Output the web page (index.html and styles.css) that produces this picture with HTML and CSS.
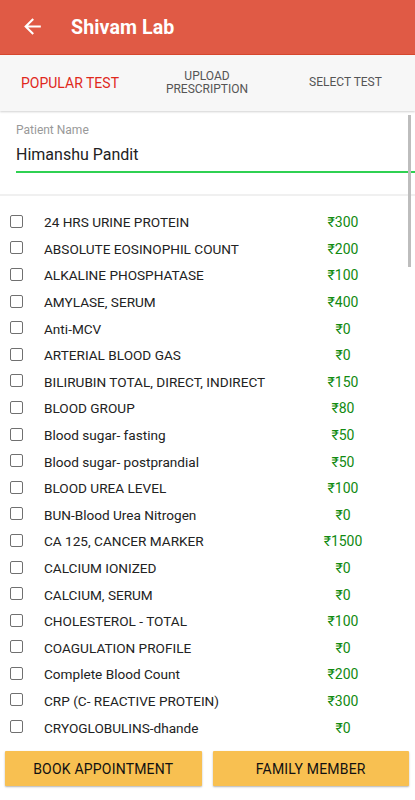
FILE: index.html
```html
<!DOCTYPE html>
<html>
<head>
<meta charset="utf-8">
<link rel="stylesheet" href="styles.css">
</head>
<body>
<div class="app">
  <header class="appbar">
    <svg class="back" width="25" height="25" viewBox="0 0 24 24"><path d="M20 11H7.83l5.59-5.59L12 4l-8 8 8 8 1.41-1.41L7.83 13H20v-2z" fill="#fff"/></svg>
    <h1 class="title">Shivam Lab</h1>
  </header>
  <nav class="tabs">
    <div class="tab active">POPULAR TEST</div>
    <div class="tab small">UPLOAD<br>PRESCRIPTION</div>
    <div class="tab small">SELECT TEST</div>
  </nav>
  <main class="content">
    <div class="scrollbar"></div>
    <section class="patient">
      <div class="label">Patient Name</div>
      <div class="value">Himanshu Pandit</div>
    </section>
    <ul class="list">
      <li><span class="cb"></span><span class="name">24 HRS URINE PROTEIN</span><span class="price">₹300</span></li>
      <li><span class="cb"></span><span class="name">ABSOLUTE EOSINOPHIL COUNT</span><span class="price">₹200</span></li>
      <li><span class="cb"></span><span class="name">ALKALINE PHOSPHATASE</span><span class="price">₹100</span></li>
      <li><span class="cb"></span><span class="name">AMYLASE, SERUM</span><span class="price">₹400</span></li>
      <li><span class="cb"></span><span class="name">Anti-MCV</span><span class="price">₹0</span></li>
      <li><span class="cb"></span><span class="name">ARTERIAL BLOOD GAS</span><span class="price">₹0</span></li>
      <li><span class="cb"></span><span class="name">BILIRUBIN TOTAL, DIRECT, INDIRECT</span><span class="price">₹150</span></li>
      <li><span class="cb"></span><span class="name">BLOOD GROUP</span><span class="price">₹80</span></li>
      <li><span class="cb"></span><span class="name">Blood sugar- fasting</span><span class="price">₹50</span></li>
      <li><span class="cb"></span><span class="name">Blood sugar- postprandial</span><span class="price">₹50</span></li>
      <li><span class="cb"></span><span class="name">BLOOD UREA LEVEL</span><span class="price">₹100</span></li>
      <li><span class="cb"></span><span class="name">BUN-Blood Urea Nitrogen</span><span class="price">₹0</span></li>
      <li><span class="cb"></span><span class="name">CA 125, CANCER MARKER</span><span class="price">₹1500</span></li>
      <li><span class="cb"></span><span class="name">CALCIUM IONIZED</span><span class="price">₹0</span></li>
      <li><span class="cb"></span><span class="name">CALCIUM, SERUM</span><span class="price">₹0</span></li>
      <li><span class="cb"></span><span class="name">CHOLESTEROL - TOTAL</span><span class="price">₹100</span></li>
      <li><span class="cb"></span><span class="name">COAGULATION PROFILE</span><span class="price">₹0</span></li>
      <li><span class="cb"></span><span class="name">Complete Blood Count</span><span class="price">₹200</span></li>
      <li><span class="cb"></span><span class="name">CRP (C- REACTIVE PROTEIN)</span><span class="price">₹300</span></li>
      <li><span class="cb"></span><span class="name">CRYOGLOBULINS-dhande</span><span class="price">₹0</span></li>
    </ul>
  </main>
  <footer class="actions">
    <button class="btn">BOOK APPOINTMENT</button>
    <button class="btn">FAMILY MEMBER</button>
  </footer>
</div>
</body>
</html>
```
FILE: styles.css
```css
* { box-sizing: border-box; }
html, body { margin: 0; padding: 0; }
body {
  font-family: Roboto, "Liberation Sans", sans-serif;
  background: #fff;
  width: 415px;
  height: 800px;
  overflow: hidden;
}
.app {
  display: flex;
  flex-direction: column;
  height: 800px;
}
.appbar {
  height: 55px;
  background: #e05a45;
  display: flex;
  align-items: center;
  padding-left: 20px;
  border-bottom: 1px solid #d9482f;
  flex: none;
}
.back { display: block; margin-right: 26px; margin-top: -1px; }
.title {
  margin: 0;
  color: #fff;
  font-size: 19.6px;
  font-weight: 700;
  letter-spacing: 0.1px;
}
.tabs {
  height: 56px;
  background: #f7f7f7;
  display: grid;
  grid-template-columns: 138px 138px 139px;
  align-items: center;
  box-shadow: 0 1px 2px rgba(0,0,0,0.18);
  position: relative;
  z-index: 1;
  flex: none;
}
.tab {
  text-align: center;
  color: #555;
  font-size: 12px;
  line-height: 13.5px;
}
.tab.active {
  color: #e0281c;
  font-size: 14px;
  text-align: left;
  padding-left: 21px;
  padding-top: 1px;
}
.content {
  flex: 1;
  overflow: hidden;
  position: relative;
}
.scrollbar {
  position: absolute;
  right: 4px;
  top: 4px;
  width: 3px;
  height: 152px;
  background: #bdbdbd;
}
.patient {
  padding: 12px 0 0 16px;
  height: 85px;
  border-bottom: 2px solid #f0f0f0;
}
.label {
  color: #999;
  font-size: 12px;
  line-height: 14px;
}
.value {
  color: #222;
  font-size: 16px;
  line-height: 20px;
  margin-top: 8px;
  padding-bottom: 6px;
  border-bottom: 2px solid #2fd152;
}
.list {
  list-style: none;
  margin: 0;
  padding: 13px 0 0 0;
  height: 541px;
  overflow: hidden;
  border-bottom: 1px solid #eee;
}
.list li {
  height: 26.6px;
  display: flex;
  align-items: center;
  padding-left: 10px;
}
.cb {
  width: 13px;
  height: 13px;
  border: 1.3px solid #707070;
  border-radius: 2px;
  flex: none;
  margin-top: -2px;
}
.name {
  margin-left: 21px;
  width: 268px;
  font-size: 13.6px;
  color: #222;
  white-space: nowrap;
}
.price {
  width: 62px;
  text-align: center;
  font-size: 14px;
  color: #118a11;
}
.actions {
  flex: none;
  display: flex;
  gap: 11px;
  padding: 15px 6px 14px 5px;
}
.btn {
  flex: 1;
  height: 35px;
  border: none;
  background: #f8c051;
  font-family: Roboto, "Liberation Sans", sans-serif;
  font-size: 14px;
  font-weight: 400;
  color: #111;
  box-shadow: 0 1px 2px rgba(0,0,0,0.3);
  border-radius: 1px;
  letter-spacing: 0.2px;
  line-height: 20px;
  padding: 0;
}
```
